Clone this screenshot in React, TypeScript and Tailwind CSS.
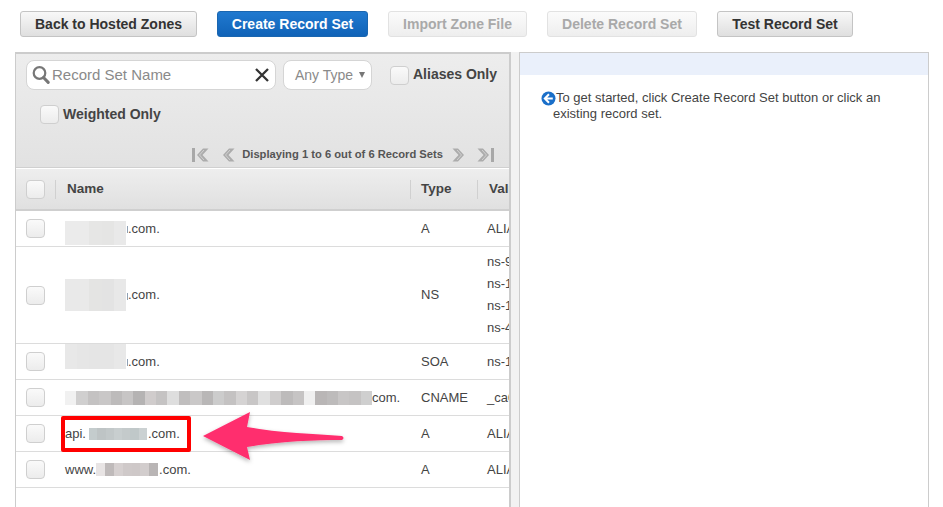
import React from "react";

const Check = ({ className = "" }: { className?: string }) => (
  <span className={"block w-[19px] h-[19px] rounded-[4px] border border-[#cfcfcf] bg-gradient-to-b from-[#fafafa] to-[#ececec] shrink-0 " + className} />
);

const Btn = ({ w, label, kind }: { w: string; label: string; kind: "normal" | "primary" | "off" }) => {
  const cls =
    kind === "primary"
      ? "bg-gradient-to-b from-[#2079cf] to-[#1063b8] border-[#1a66b0] text-white"
      : kind === "off"
      ? "bg-gradient-to-b from-[#fbfbfb] to-[#eeeeee] border-[#e2e2e2] text-[#a9a9a9]"
      : "bg-gradient-to-b from-[#f8f8f8] to-[#dfdfdf] border-[#c4c4c4] text-[#333]";
  return (
    <div className={w + " h-[26px] shrink-0 rounded-[3px] border flex items-center justify-center text-[14px] font-bold " + cls}>
      {label}
    </div>
  );
};

const Blur = ({ colors, w, h, className = "" }: { colors: string[]; w: number; h: number; className?: string }) => (
  <span className={"inline-flex align-middle shrink-0 " + className} style={{ width: w, height: h }}>
    {colors.map((c, i) => (
      <span key={i} className="block flex-1 h-full" style={{ background: c }} />
    ))}
  </span>
);

const Stub = () => <span className="block w-[1px] h-[7px] mt-[2px] ml-[1px] bg-[#8fa0b4] shrink-0" />;

const Pager = ({ flip, end }: { flip?: boolean; end?: boolean }) => (
  <svg width={end ? 17 : 14} height="16" viewBox={end ? "0 0 17 16" : "0 0 14 16"} className={flip ? "-scale-x-100" : ""}>
    {end && <rect x="0" y="1" width="3" height="14" fill="#a8a8a8" />}
    <path
      d={end ? "M11 1.5 L5 8 L11 14.5 L16.5 14.5 L10.5 8 L16.5 1.5 Z" : "M7 1.5 L1 8 L7 14.5 L12.5 14.5 L6.5 8 L12.5 1.5 Z"}
      fill="#acacac"
    />
    <path
      d={end ? "M12 3 L7.5 8 L12 13" : "M8 3 L3.5 8 L8 13"}
      fill="none"
      stroke="#d2d2d2"
      strokeWidth="1"
    />
  </svg>
);

const Row = ({ h, name, type, value }: { h: string; name: React.ReactNode; type: string; value: string[] }) => (
  <div className={h + " flex items-center border-b border-[#dcdcdc] text-[13px] text-[#444] shrink-0"}>
    <div className="w-[49px] pl-[10px] shrink-0"><Check /></div>
    <div className="w-[356px] shrink-0 flex items-center whitespace-nowrap">{name}</div>
    <div className="w-[66px] shrink-0 whitespace-nowrap">{type}</div>
    <div className={"flex flex-col gap-[3px] whitespace-nowrap leading-[19px] " + (value.length > 1 ? "pb-[2px]" : "")}>
      {value.map((v, i) => <span key={i}>{v}</span>)}
    </div>
  </div>
);

const g1 = ["#ebebeb", "#ebebeb", "#e6e6e5", "#e5e5e4", "#e9e9e9"];
const g2 = ["#e9e9e9", "#e9e9e9", "#e4e4e3", "#e3e3e3", "#e8e8e8"];
const g3 = ["#e8e8e8", "#e6e6e6", "#e5e5e5", "#e5e5e5", "#e8e8e8"];
const cname = ["#f1f1f1","#d0cfcf","#c4c2c2","#c9c7c7","#bdbbbb","#c7c5c5","#b5b3b3","#d0cccc","#c5c3c3","#dedede","#c0bebe","#cac8c8","#b9b7b7","#cccccc","#c4c2c2","#d5d3d3","#c8c6c6","#e0e0e0","#cfcdcd","#bdbbbb","#c6c4c4","#f0f0f0","#b9b6b6","#bdbbbb","#c8c6c6","#c5c3c3","#cfcfcf"];
const api = ["#c4cccd","#bec4c5","#c2c8c9","#c8cecf","#c4cacb","#c0c8c9","#cbd1d2"];
const www = ["#e8e4e4","#bfbaba","#d6d0d0","#cfc9c9","#cec8c8","#d2cdcd","#b9b5b5"];

export default function App() {
  return (
    <div className="relative w-[943px] h-[507px] overflow-hidden bg-white font-['Liberation_Sans',Arial,sans-serif] text-[#444]">
      <div className="flex h-[52px] pt-[11px] pl-[20px] gap-[20px] items-start">
        <Btn w="w-[177px]" label="Back to Hosted Zones" kind="normal" />
        <Btn w="w-[151px]" label="Create Record Set" kind="primary" />
        <Btn w="w-[139px]" label="Import Zone File" kind="off" />
        <Btn w="w-[150px]" label="Delete Record Set" kind="off" />
        <Btn w="w-[136px]" label="Test Record Set" kind="normal" />
      </div>

      <div className="flex h-[455px] pl-[15px]">
        <div className="w-[496px] h-full shrink-0 overflow-hidden border-l border-r-2 border-t-2 border-[#cccccc] flex flex-col">
          <div className="h-[114px] shrink-0 bg-gradient-to-b from-[#ededed] to-[#e2e2e2] border-b border-[#d0d0d0] relative">
            <div className="flex items-center pt-[6px] pl-[10px]">
              <div className="w-[250px] h-[30px] rounded-[8px] bg-white border border-[#d5d5d5] flex items-center pl-[5px] pr-[5px] shrink-0">
                <svg width="18" height="20" viewBox="0 0 18 20" className="shrink-0">
                  <circle cx="7.5" cy="8" r="5.8" fill="none" stroke="#777" strokeWidth="2.2" />
                  <path d="M11.5 12.5 L16.2 17.4" stroke="#777" strokeWidth="3" strokeLinecap="round" />
                </svg>
                <span className="ml-[2px] text-[15px] text-[#8a8a8a] whitespace-nowrap flex-1">Record Set Name</span>
                <svg width="14" height="14" viewBox="0 0 14 14" className="mr-[1px] shrink-0">
                  <path d="M1 1 L13 13 M13 1 L1 13" stroke="#333" strokeWidth="2.3" />
                </svg>
              </div>
              <div className="ml-[7px] w-[89px] h-[30px] rounded-[8px] bg-white border border-[#d5d5d5] flex items-center pl-[11px] shrink-0 text-[14px] text-[#8a8a8a]">
                Any Type
                <span className="ml-[6px] w-0 h-0 border-l-[3px] border-r-[3px] border-t-[6px] border-l-transparent border-r-transparent border-t-[#777]" />
              </div>
              <Check className="ml-[18px]" />
              <span className="ml-[4px] text-[14px] font-bold text-[#444] whitespace-nowrap -mt-[1px]">Aliases Only</span>
            </div>
            <div className="flex items-center pt-[14px] pl-[24px]">
              <Check />
              <span className="ml-[4px] text-[14px] font-bold text-[#444] whitespace-nowrap">Weighted Only</span>
            </div>
            <div className="absolute right-[15px] bottom-[4px] flex items-center">
              <Pager end />
              <span className="w-[13px]" />
              <Pager />
              <span className="ml-[6px] text-[11.2px] font-bold text-[#555] whitespace-nowrap">Displaying 1 to 6 out of 6 Record Sets</span>
              <span className="ml-[8px]"><Pager flip /></span>
              <span className="ml-[12px]"><Pager end flip /></span>
            </div>
          </div>

          <div className="h-[43px] shrink-0 bg-gradient-to-b from-[#eeeeee] to-[#e0e0e0] border-t border-white border-b-2 border-b-[#cfcfcf] flex items-center text-[13.5px] font-bold text-[#444]">
            <div className="w-[39px] pl-[10px] shrink-0"><Check /></div>
            <div className="w-[355px] h-[19px] pl-[11px] border-l border-[#d0d0d0] shrink-0 flex items-center">Name</div>
            <div className="w-[67px] h-[19px] pl-[10px] border-l border-[#d0d0d0] shrink-0 flex items-center">Type</div>
            <div className="h-[19px] pl-[11px] border-l border-[#d0d0d0] shrink-0 flex items-center">Value</div>
          </div>

          <Row h="h-[36px]" type="A" value={["ALIAS"]} name={<><Blur colors={g1} w={61} h={24} className="translate-y-[4px]" /><Stub /><span>.com.</span></>} />
          <Row h="h-[97px]" type="NS" value={["ns-9","ns-1","ns-1","ns-4"]} name={<><Blur colors={g2} w={61} h={32} /><Stub /><span>.com.</span></>} />
          <Row h="h-[36px]" type="SOA" value={["ns-1"]} name={<><Blur colors={g3} w={61} h={25} className="-translate-y-[5px]" /><Stub /><span>.com.</span></>} />
          <Row h="h-[36px]" type="CNAME" value={["_ca0"]} name={<><Blur colors={cname} w={307} h={14} /><span>com.</span></>} />
          <Row h="h-[36px]" type="A" value={["ALIAS"]} name={<><span>api.</span><Blur colors={api} w={58} h={12} className="ml-[3px] mr-[1px]" /><span>.com.</span></>} />
          <Row h="h-[36px]" type="A" value={["ALIAS"]} name={<><span>www.</span><Blur colors={www} w={62} h={13} className="mr-[1px]" /><span>.com.</span></>} />
        </div>

        <div className="w-[8px] shrink-0 h-full bg-[#f2f2f2]" />

        <div className="w-[410px] h-full shrink-0 border-l border-r border-t border-[#cccccc]">
          <div className="h-[22px] bg-[#eaf0fb]" />
          <div className="flex pl-[21px] pt-[15px]">
            <svg width="15" height="15" viewBox="0 0 15 15" className="shrink-0 mt-[1px]">
              <circle cx="7.5" cy="7.5" r="7" fill="#1a6fc9" />
              <path d="M8 3.2 L3.8 7.5 L8 11.8 M4.2 7.5 L11.8 7.5" fill="none" stroke="#fff" strokeWidth="2" />
            </svg>
            <p className="w-[345px] text-[13px] leading-[16px] text-[#444] -ml-[3px] m-0">
              <span className="ml-[3px]">To get started, click Create Record Set button or click an</span>
              <br />
              <span>existing record set.</span>
            </p>
          </div>
        </div>
      </div>

      <div className="absolute left-[61px] top-[416px] w-[130px] h-[36px] border-[4px] border-[#ff0000] rounded-[2px]" />
      <svg className="absolute left-[190px] top-[400px]" width="170" height="75" viewBox="0 0 170 75">
        <defs>
          <filter id="sh" x="-10%" y="-10%" width="120%" height="130%">
            <feDropShadow dx="0" dy="2" stdDeviation="2" floodColor="#000" floodOpacity="0.3" />
          </filter>
        </defs>
        <path
          d="M13 36 L60 12 L57 27 C90 33 125 34 152 36 Q155 38 152 40 C125 40 90 41 57 47 L60 60 Z"
          fill="#ff2e6e"
          filter="url(#sh)"
        />
      </svg>
    </div>
  );
}
